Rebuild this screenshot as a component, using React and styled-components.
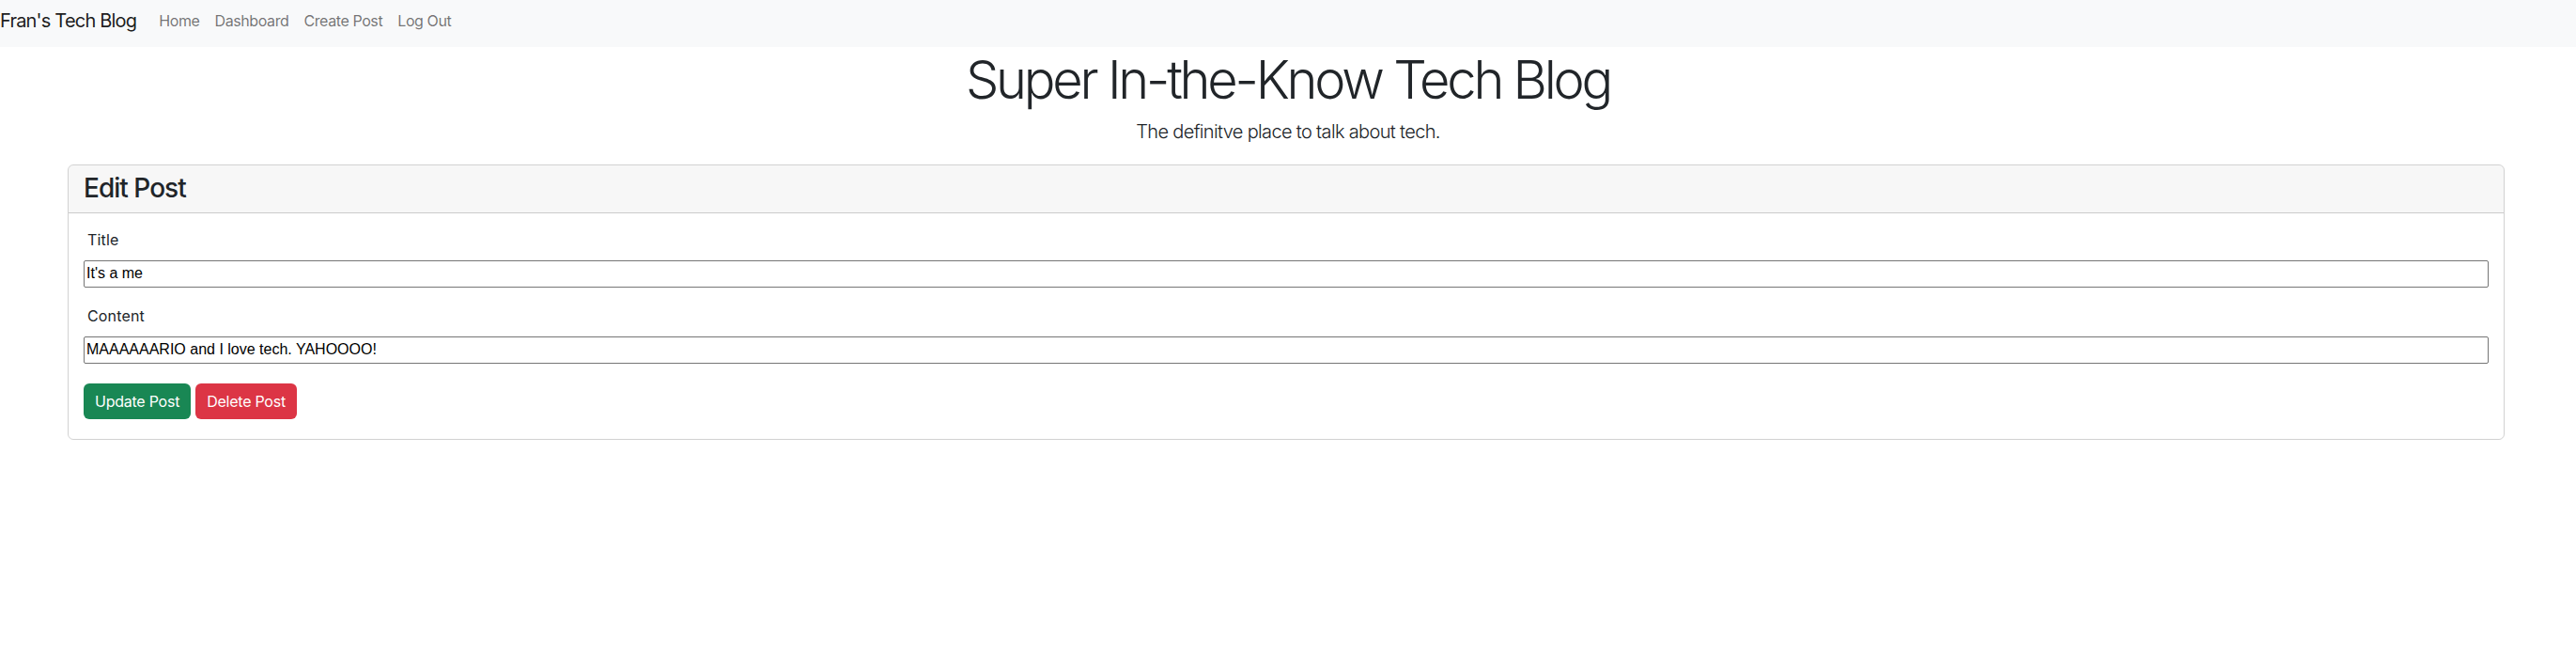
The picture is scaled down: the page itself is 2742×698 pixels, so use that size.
import React from 'react';
import styled, { createGlobalStyle } from 'styled-components';

const GlobalStyle = createGlobalStyle`
  * {
    box-sizing: border-box;
  }

  body {
    margin: 0;
    background: #fff;
    color: #212529;
    font-family: Inter, "Noto Sans", sans-serif;
    font-size: 16px;
    line-height: 1.5;
  }
`;

const Navbar = styled.nav`
  height: 50px;
  padding-bottom: 6px;
  background-color: #f8f9fa;
  display: flex;
  align-items: center;
`;

const Brand = styled.a`
  margin-right: 16px;
  font-size: 20px;
  color: rgba(0, 0, 0, 0.9);
  text-decoration: none;
  letter-spacing: -0.04em;
`;

const NavLinks = styled.div`
  display: flex;
`;

const NavLink = styled.a`
  padding: 0 8px;
  font-size: 16px;
  color: rgba(0, 0, 0, 0.55);
  text-decoration: none;
  letter-spacing: -0.025em;
`;

const Header = styled.header`
  text-align: center;
  padding-top: 2px;
`;

const Title = styled.h1`
  margin: 0;
  font-size: 56px;
  font-weight: 300;
  line-height: 1.2;
  letter-spacing: -0.058em;
`;

const Lead = styled.p`
  margin: 6px 0 0;
  font-size: 20px;
  font-weight: 300;
  line-height: 1.5;
  letter-spacing: -0.033em;
`;

const Card = styled.section`
  margin: 20px 76px 0 72px;
  border: 1px solid rgba(0, 0, 0, 0.175);
  border-radius: 6px;
  overflow: hidden;
`;

const CardHeader = styled.div`
  padding: 8px 16px;
  background-color: rgba(0, 0, 0, 0.03);
  border-bottom: 1px solid rgba(0, 0, 0, 0.175);
`;

const CardTitle = styled.h3`
  margin: 0;
  font-size: 28px;
  font-weight: 500;
  line-height: 1.2;
  letter-spacing: -0.035em;
`;

const CardBody = styled.form`
  padding: 16px 16px 21px;
`;

const Field = styled.div`
  & + & {
    margin-top: 18px;
  }
`;

const Label = styled.label`
  display: block;
  padding-left: 4px;
  margin-bottom: 10px;
  font-size: 16px;
  line-height: 24px;
  letter-spacing: 0.01em;
`;

const Input = styled.input`
  display: block;
  width: 100%;
  height: 29px;
  padding: 0 2px;
  border: 1px solid #767676;
  border-radius: 2px;
  font-family: "Liberation Sans", Arial, sans-serif;
  font-size: 16px;
  color: #000;
  background: #fff;
`;

const Actions = styled.div`
  display: flex;
  gap: 5px;
  margin-top: 21px;
`;

const Button = styled.button`
  height: 38px;
  padding: 0 12px;
  border: none;
  border-radius: 6px;
  background-color: ${({ $variant }) => ($variant === 'danger' ? '#dc3545' : '#198754')};
  color: #fff;
  font-family: Inter, "Noto Sans", sans-serif;
  font-size: 16px;
  letter-spacing: -0.015em;
`;

const App = () => (
  <>
    <GlobalStyle />
    <Navbar>
      <Brand href="#">Fran's Tech Blog</Brand>
      <NavLinks>
        <NavLink href="#">Home</NavLink>
        <NavLink href="#">Dashboard</NavLink>
        <NavLink href="#">Create Post</NavLink>
        <NavLink href="#">Log Out</NavLink>
      </NavLinks>
    </Navbar>
    <Header>
      <Title>Super In-the-Know Tech Blog</Title>
      <Lead>The definitve place to talk about tech.</Lead>
    </Header>
    <Card>
      <CardHeader>
        <CardTitle>Edit Post</CardTitle>
      </CardHeader>
      <CardBody onSubmit={(e) => e.preventDefault()}>
        <Field>
          <Label htmlFor="title">Title</Label>
          <Input id="title" defaultValue="It's a me" />
        </Field>
        <Field>
          <Label htmlFor="content">Content</Label>
          <Input id="content" defaultValue="MAAAAAARIO and I love tech. YAHOOOO!" />
        </Field>
        <Actions>
          <Button type="submit">Update Post</Button>
          <Button type="button" $variant="danger">Delete Post</Button>
        </Actions>
      </CardBody>
    </Card>
  </>
);

export default App;
